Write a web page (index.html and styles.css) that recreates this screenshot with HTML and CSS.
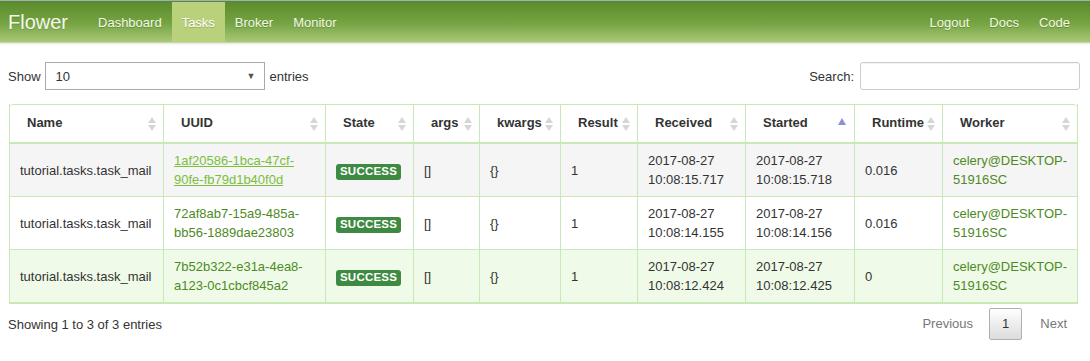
FILE: index.html
```html
<!DOCTYPE html>
<html lang="en">
<head>
    <meta charset="UTF-8">
    <title>Flower</title>
    <link rel="stylesheet" href="styles.css">
</head>
<body>
    <div class="navbar">
        <a class="brand" href="#">Flower</a>
        <ul class="nav">
            <li><a href="#">Dashboard</a></li>
            <li class="active"><a href="#">Tasks</a></li>
            <li><a href="#">Broker</a></li>
            <li><a href="#">Monitor</a></li>
        </ul>
        <ul class="nav nav-right">
            <li><a href="#">Logout</a></li>
            <li><a href="#">Docs</a></li>
            <li><a href="#">Code</a></li>
        </ul>
    </div>

    <div class="container">
        <div class="controls">
            <label class="length">Show
                <span class="select">10<span class="caret">&#9660;</span></span>
                entries</label>
            <label class="search">Search: <span class="search-input"></span></label>
        </div>

        <div class="table-wrap">
            <table class="tasks">
                <colgroup>
                    <col style="width:153px">
                    <col style="width:162px">
                    <col style="width:88px">
                    <col style="width:66px">
                    <col style="width:81px">
                    <col style="width:77px">
                    <col style="width:108px">
                    <col style="width:109px">
                    <col style="width:88px">
                    <col>
                </colgroup>
                <thead>
                    <tr>
                        <th class="sorting">Name</th>
                        <th class="sorting">UUID</th>
                        <th class="sorting">State</th>
                        <th class="sorting">args</th>
                        <th class="sorting">kwargs</th>
                        <th class="sorting">Result</th>
                        <th class="sorting">Received</th>
                        <th class="sorting-asc">Started</th>
                        <th class="sorting">Runtime</th>
                        <th class="sorting">Worker</th>
                    </tr>
                </thead>
                <tbody>
                    <tr class="odd">
                        <td>tutorial.tasks.task_mail</td>
                        <td><a class="uuid hover" href="#">1af20586-1bca-47cf-90fe-fb79d1b40f0d</a></td>
                        <td><span class="label">SUCCESS</span></td>
                        <td>[]</td>
                        <td>{}</td>
                        <td>1</td>
                        <td>2017-08-27 10:08:15.717</td>
                        <td>2017-08-27 10:08:15.718</td>
                        <td>0.016</td>
                        <td><a class="worker" href="#">celery@DESKTOP-51916SC</a></td>
                    </tr>
                    <tr>
                        <td>tutorial.tasks.task_mail</td>
                        <td><a class="uuid" href="#">72af8ab7-15a9-485a-bb56-1889dae23803</a></td>
                        <td><span class="label">SUCCESS</span></td>
                        <td>[]</td>
                        <td>{}</td>
                        <td>1</td>
                        <td>2017-08-27 10:08:14.155</td>
                        <td>2017-08-27 10:08:14.156</td>
                        <td>0.016</td>
                        <td><a class="worker" href="#">celery@DESKTOP-51916SC</a></td>
                    </tr>
                    <tr class="hl">
                        <td>tutorial.tasks.task_mail</td>
                        <td><a class="uuid" href="#">7b52b322-e31a-4ea8-a123-0c1cbcf845a2</a></td>
                        <td><span class="label">SUCCESS</span></td>
                        <td>[]</td>
                        <td>{}</td>
                        <td>1</td>
                        <td>2017-08-27 10:08:12.424</td>
                        <td>2017-08-27 10:08:12.425</td>
                        <td>0</td>
                        <td><a class="worker" href="#">celery@DESKTOP-51916SC</a></td>
                    </tr>
                </tbody>
            </table>
        </div>

        <div class="footer">
            <div class="info">Showing 1 to 3 of 3 entries</div>
            <ul class="pagination">
                <li class="disabled"><a href="#">Previous</a></li>
                <li class="current"><a href="#">1</a></li>
                <li class="disabled"><a href="#">Next</a></li>
            </ul>
        </div>
    </div>
</body>
</html>
```

FILE: styles.css
```css
body {
    margin: 0;
    font-family: "Liberation Sans", Arial, sans-serif;
    font-size: 13px;
    color: #333;
    background: #fff;
}
a {
    text-decoration: none;
}
ul {
    list-style: none;
    margin: 0;
    padding: 0;
}

/* navbar */
.navbar {
    display: flex;
    align-items: stretch;
    height: 40px;
    padding-top: 1px;
    background: linear-gradient(to bottom, #5a8a2c 0%, #76a443 55%, #a9c878 100%);
    border-top: 1px solid #9cb0b8;
    border-bottom: 1px solid #c4d99c;
    box-shadow: 0 1px 2px #e3e3e3;
}
.brand {
    display: flex;
    align-items: center;
    padding: 0 19px 0 8px;
    font-size: 20px;
    color: #f4f8ea;
    text-shadow: 0 1px 0 rgba(0,0,0,0.15);
}
.nav {
    display: flex;
}
.nav li a {
    display: flex;
    align-items: center;
    height: 100%;
    padding: 0 10px;
    color: #f2f9e4;
    font-size: 13px;
    text-shadow: 0 1px 0 rgba(0,0,0,0.2);
}
.nav li:first-child a {
    padding-left: 11px;
}
.nav li.active a {
    background: #b9d17a;
    color: #fff;
}
.nav-right {
    margin-left: auto;
    margin-right: 10px;
}

/* content */
.container {
    padding: 0 10px 0 8px;
}
.controls {
    display: flex;
    justify-content: space-between;
    align-items: center;
    margin-top: 19px;
    height: 28px;
}
.length, .search {
    display: flex;
    align-items: center;
}
.select {
    display: flex;
    align-items: center;
    justify-content: space-between;
    width: 200px;
    height: 26px;
    margin: 0 5px 0 4px;
    padding: 0 8px 0 10px;
    border: 1px solid #aaa;
    background: #fff;
    color: #333;
}
.caret {
    font-size: 9px;
    color: #555;
}
.search-input {
    display: block;
    width: 218px;
    height: 26px;
    margin-left: 6px;
    border: 1px solid #ccc;
    border-radius: 3px;
    box-shadow: inset 0 1px 1px rgba(0,0,0,0.05);
}

/* table */
.table-wrap {
    margin-top: 14px;
    margin-left: 1px;
    margin-right: 2px;
}
.tasks {
    width: 100%;
    table-layout: fixed;
    border-collapse: separate;
    border-spacing: 0;
    border-left: 1px solid #c8e8b8;
    border-right: 1px solid #c8e8b8;
    border-bottom: 2px solid #c8e8b8;
}
.tasks th {
    position: relative;
    text-align: left;
    font-weight: bold;
    line-height: 19px;
    padding: 8px 20px 10px 17px;
    border-top: 1px solid #c8e8b8;
    border-left: 1px solid #c8e8b8;
    border-bottom: 2px solid #c8e8b8;
    white-space: nowrap;
}
.tasks th:first-child {
    border-left: none;
    border-top-left-radius: 4px;
}
.tasks th:last-child {
    border-top-right-radius: 4px;
}
.tasks th.sorting::before,
.tasks th.sorting::after {
    content: "";
    position: absolute;
    right: 7px;
    border-left: 4px solid transparent;
    border-right: 4px solid transparent;
}
.tasks th.sorting::before {
    top: 12px;
    border-bottom: 6px solid #d6d6d6;
}
.tasks th.sorting::after {
    top: 20px;
    border-top: 6px solid #d6d6d6;
}
.tasks th.sorting-asc::after {
    content: "";
    position: absolute;
    right: 8px;
    top: 13px;
    border-left: 4px solid transparent;
    border-right: 4px solid transparent;
    border-bottom: 7px solid #8b8fd9;
}
.tasks td {
    line-height: 19px;
    padding: 7px 10px 7px 10px;
    border-left: 1px solid #c8e8b8;
    border-bottom: 1px solid #c8e8b8;
    vertical-align: middle;
    word-wrap: break-word;
}
.tasks td:first-child {
    border-left: none;
}
.tasks td:last-child {
    padding-right: 4px;
}
.tasks tr:last-child td {
    border-bottom: none;
}
.tasks tr.odd td {
    background: #f5f5f5;
}
.tasks tr.hl td {
    background: #effbe8;
}
.uuid {
    color: #4e8a1f;
}
.uuid.hover {
    color: #7bbf3c;
    text-decoration: underline;
}
.worker {
    color: #4e8a1f;
}
.label {
    display: inline-block;
    padding: 1px 4px 2px;
    font-size: 11.5px;
    font-weight: bold;
    line-height: 13px;
    letter-spacing: 0.2px;
    color: #fff;
    background: #3f8a42;
    border-radius: 3px;
}

/* footer */
.footer {
    display: flex;
    justify-content: space-between;
    align-items: center;
    margin-top: 4px;
}
.pagination {
    display: flex;
    align-items: center;
    margin-right: 3px;
}
.pagination li a {
    display: block;
    padding: 8px 9px;
    line-height: 14px;
    color: #777;
    border: 1px solid transparent;
    border-radius: 2px;
}
.pagination li.disabled:first-child a {
    margin-right: 6px;
}
.pagination li.current a {
    color: #333;
    padding: 8px 12px;
    margin-right: 8px;
    border-color: #b0b0b0;
    background: linear-gradient(to bottom, #fff 0%, #dcdcdc 100%);
}
```
